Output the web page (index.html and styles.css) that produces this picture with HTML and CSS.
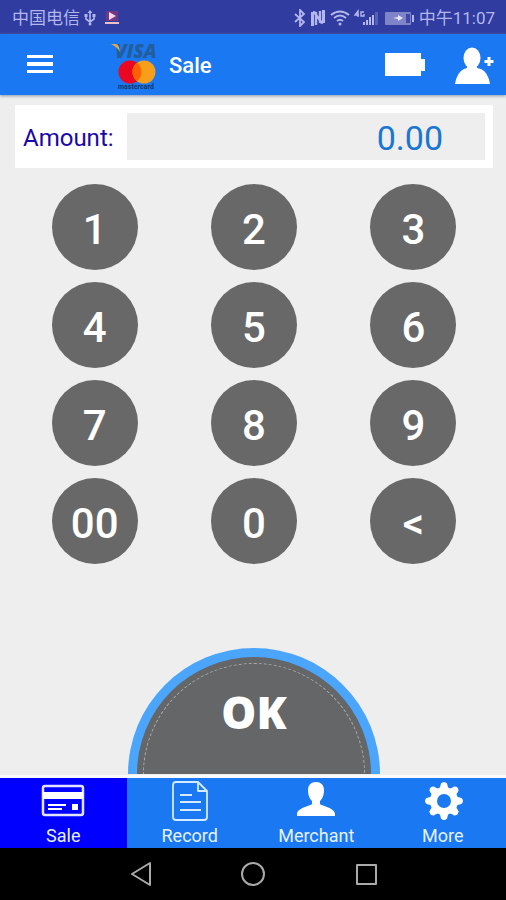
FILE: index.html
```html
<!DOCTYPE html>
<html lang="en">
<head>
<meta charset="utf-8">
<meta name="viewport" content="width=device-width, initial-scale=1">
<title>Sale</title>
<link rel="stylesheet" href="styles.css">
</head>
<body>
<div class="status">
  <span class="carrier" lang="zh">中国电信</span>
  <svg width="12" height="18" viewBox="0 0 12 18" fill="none" stroke="currentColor" stroke-width="1.600"><path d="M6 3v11M2 7v3l4 3 4-3V6"/><path d="M3.500 4L6 1l2.500 3zM.500 5h3v3h-3zM8.500 5h3v3h-3z" fill="currentColor" stroke="none"/><circle cx="6" cy="15" r="1.500" fill="currentColor" stroke="none"/></svg>
  <svg class="player" width="16" height="16" viewBox="0 0 16 16"><path fill="#713780" d="M2 1h12v10H2z"/><path fill="#efd9e8" d="M5 2l7 4-7 4z"/><path fill="#eac0c4" d="M1 12h14v2H1z"/></svg>
  <span class="spacer"></span>
  <svg width="12" height="18" viewBox="0 0 12 18" fill="none" stroke="currentColor" stroke-width="1.800"><path d="M1 5l9 8-4 4V1l4 4-9 8"/></svg>
  <svg width="16" height="18" viewBox="0 0 16 18" fill="none" stroke="currentColor"><path stroke-width="3" d="M2.500 17V3M13.500 1v13"/><path stroke-width="2.400" d="M3 3l3 1v12M13 14l-3-1V2M4 3l8 11"/></svg>
  <svg width="20" height="18" viewBox="0 0 20 18" fill="none" stroke="currentColor" stroke-width="2"><path d="M1 6q9-7 18 0M4 9q6-5 12 0M7 12q3-2.500 6 0"/><circle cx="10" cy="15" r="1.500" fill="currentColor" stroke="none"/></svg>
  <svg class="signal" width="26" height="18" viewBox="0 0 26 18"><g fill="none" stroke="currentColor" stroke-width="1.400"><path d="M4 8V2L1 6h4M10 3H7v4h3V5"/></g><path fill="currentColor" d="M9 13h2v3H9zM12 11h2v5h-2zM15 8h2v8h-2zM18 6h2v10h-2z"/><path fill="currentColor" opacity=".3" d="M21 3h3v13h-3z"/></svg>
  <svg width="30" height="18" viewBox="0 0 30 18"><rect x="1" y="3" width="26" height="13" rx="1" fill="#7f83c8"/><path fill="#4146a5" d="M22 5h4v9h-4z"/><path fill="#e5e6ff" d="M9 9l5-1V6l5 3-5 3v-2z"/><path fill="currentColor" d="M28 6h2v7h-2z"/></svg>
  <time class="clock" lang="zh">中午11:07</time>
</div>

<header class="appbar">
  <button class="icon-btn menu" aria-label="Menu">
    <svg width="28" height="20" viewBox="0 0 28 20" fill="#fff"><path d="M1 0h26v3H1zM1 7h26v4H1zM1 15h26v3H1z"/></svg>
  </button>
  <svg class="brand" width="50" height="56" viewBox="0 -3 50 56" role="img" aria-label="Card brands">
    <text class="visa" x="5" y="18">VISA</text>
    <path fill="#dda65a" d="M1 4h5q2 0 3 3l1 5Q7 7 1 4z"/>
    <circle cx="20" cy="32" r="11.500" fill="#eb0722"/>
    <circle cx="34" cy="32" r="11.500" fill="#f79e1b"/>
    <path fill="#ff5f00" d="M27 22.900a11.500 11.500 0 0 1 0 18.200a11.500 11.500 0 0 1 0-18.200z"/>
    <text class="mc" x="26" y="49">mastercard</text>
  </svg>
  <h1>Sale</h1>
  <span class="spacer"></span>
  <svg class="battery" width="42" height="26" viewBox="0 0 42 26" fill="#fff"><path d="M1 1h36v6h4v12h-4v5H1z"/></svg>
  <button class="icon-btn" aria-label="Add user">
    <svg width="40" height="38" viewBox="0 0 40 38" fill="#fff"><ellipse cx="18" cy="12" rx="8.500" ry="10.500"/><path d="M13 20h10v2l4 1q7 3 9 15H1q2-12 9-15l3-1z"/><path d="M33.500 11h3v3h3v3h-3v3h-3v-3h-3v-3h3z"/></svg>
  </button>
</header>

<main>
  <div class="amount">
    <label for="amount">Amount:</label>
    <input id="amount" type="text" inputmode="decimal" value="0.00">
  </div>
  <div class="keypad">
    <button>1</button><button>2</button><button>3</button>
    <button>4</button><button>5</button><button>6</button>
    <button>7</button><button>8</button><button>9</button>
    <button>00</button><button>0</button><button>&lt;</button>
  </div>
  <button class="ok"><span class="ring">OK</span></button>
</main>

<nav class="tabs">
  <a class="active" href="#sale">
    <svg width="44" height="40" viewBox="0 0 44 40"><rect x="2" y="5" width="40" height="29" rx="2" fill="none" stroke="#e4e3ff" stroke-width="2.500"/><path fill="#fff" d="M2 11h40v7H2zM31 23h6v6h-6zM7 23h18v2H7zM7 27h14v2H7z"/></svg>
    Sale</a>
  <a href="#record">
    <svg width="44" height="40" viewBox="0 0 44 40" fill="none" stroke="#d3eaff" stroke-width="1.800"><path d="M8 1h22l9 9v26q0 3-3 3H8q-3 0-3-3V4q0-3 3-3zM30 1v9h9M12 14h12M12 21h21M12 29h21" stroke-linejoin="round"/></svg>
    Record</a>
  <a href="#merchant">
    <svg width="44" height="40" viewBox="0 0 44 40" fill="#fff"><path d="M22 1c5 0 8 3 8 8 0 6-2 9-4 11v3c2 2 15 4 15 10v2H3v-2c0-6 13-8 15-10v-3c-2-2-4-5-4-11 0-5 3-8 8-8z"/></svg>
    Merchant</a>
  <a href="#more">
    <svg width="44" height="40" viewBox="-23 -20 44 40" fill="#fff"><defs><path id="tooth" d="M-4.500-12L-3-17.500Q0-20.500 3-17.500L4.500-12z"/></defs><circle r="10.500" fill="none" stroke="#fff" stroke-width="7"/><use href="#tooth"/><use href="#tooth" transform="rotate(45)"/><use href="#tooth" transform="rotate(90)"/><use href="#tooth" transform="rotate(135)"/><use href="#tooth" transform="rotate(180)"/><use href="#tooth" transform="rotate(225)"/><use href="#tooth" transform="rotate(270)"/><use href="#tooth" transform="rotate(315)"/></svg>
    More</a>
</nav>

<div class="sysbar">
  <button class="icon-btn" aria-label="Back"><svg width="24" height="26" viewBox="0 0 24 26"><path d="M4 13L22 2v22z"/></svg></button>
  <button class="icon-btn" aria-label="Home"><svg width="26" height="26" viewBox="0 0 26 26"><circle cx="13" cy="13" r="11"/></svg></button>
  <button class="icon-btn" aria-label="Recent apps"><svg width="24" height="26" viewBox="0 0 24 26"><path d="M3 4h19v19H3z"/></svg></button>
</div>
</body>
</html>
```

FILE: styles.css
```css
* { box-sizing: border-box; }

body {
  margin: 0;
  min-height: 100vh;
  display: flex;
  flex-direction: column;
  background: #eee;
  font-family: Roboto, "Noto Sans CJK SC", sans-serif;
}

button, input { font: inherit; border: 0; padding: 0; }
svg { display: block; flex: none; }
.spacer { flex: 1; }

.icon-btn {
  display: flex;
  background: none;
  cursor: pointer;
}

.status {
  display: flex;
  align-items: center;
  gap: 4px;
  height: 34px;
  padding: 2px 11px 0 12px;
  background: #303c9f;
  color: #b3b7ed;
  font-size: 17px;
  line-height: 24px;
}
.player { margin-left: 4px; }
.clock { white-space: nowrap; margin-left: 1px; }

.appbar {
  display: flex;
  align-items: center;
  height: 61px;
  padding: 0 12px 0 26px;
  background: #1a78f2;
  color: #fff;
  box-shadow: 0 1px 3px #8b93a5;
}
.brand { margin: 0 9px 0 56px; }
.visa {
  font: italic 800 19px "Open Sans", sans-serif;
  fill: #235d9b;
}
.mc {
  font: bold 7px Roboto, sans-serif;
  fill: #173564;
  text-anchor: middle;
}
h1 {
  margin: 0;
  padding-top: 2px;
  font-size: 22px;
  line-height: 30px;
  font-weight: 500;
}
.battery { margin-right: 28px; }

main {
  flex: 1;
  display: flex;
  flex-direction: column;
  padding: 10px 13px 0 15px;
}

.amount {
  display: flex;
  align-items: center;
  gap: 13px;
  padding: 8px;
  background: #fff;
}
.amount label {
  padding-top: 2px;
  color: #1a08a8;
  font-size: 24px;
}
.amount input {
  flex: 1;
  min-width: 0;
  height: 47px;
  padding: 2px 42px 0 8px;
  background: #eee;
  color: #1976d2;
  font-size: 34px;
  text-align: right;
}

.keypad {
  display: grid;
  grid-template-columns: repeat(3, 1fr);
  justify-items: center;
  gap: 12px 0;
  margin: 16px 0 24px;
}
.keypad button {
  width: 86px;
  height: 86px;
  padding-top: 4px;
  border-radius: 50%;
  background: #686868;
  color: #fff;
  font-size: 42px;
  font-weight: 500;
}

.ok {
  display: flex;
  width: 252px;
  height: 126px;
  margin: auto auto 0;
  padding: 6px 6px 0;
  border: 9px solid #4ba5fb;
  border-bottom: 0;
  border-radius: 126px 126px 0 0;
  background: #646668;
  color: #fff;
}
.ring {
  flex: 1;
  align-self: stretch;
  padding-top: 18px;
  border: 1px dashed #adadad;
  border-bottom: 0;
  border-radius: 111px 111px 0 0;
  font: 800 44px/60px "Open Sans", sans-serif;
}

.tabs {
  display: grid;
  grid-template-columns: repeat(4, 1fr);
  margin-top: 1px;
  border-top: 3px solid #fafafa;
  background: #1a78f2;
}
.tabs a {
  display: flex;
  flex-direction: column;
  align-items: center;
  gap: 5px;
  padding: 3px 0 2px;
  color: #e6f3ff;
  font-size: 18px;
  line-height: 20px;
  text-decoration: none;
}
.tabs .active { background: #0000fe; }

.sysbar {
  display: flex;
  justify-content: center;
  align-items: center;
  gap: 88px;
  height: 52px;
  background: #000;
}
.sysbar svg {
  fill: none;
  stroke: #aaa;
  stroke-width: 2;
  stroke-linejoin: round;
}
```
